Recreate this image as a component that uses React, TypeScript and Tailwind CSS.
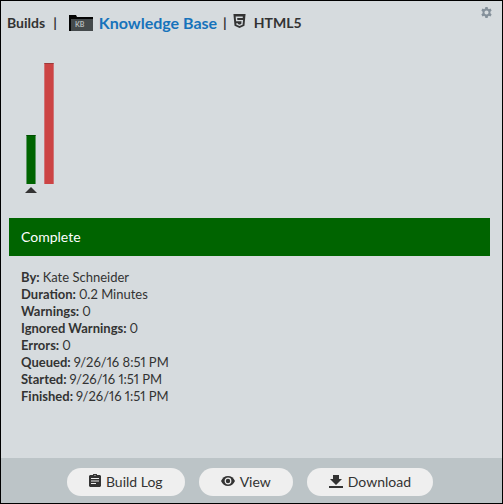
import type { ReactNode } from "react";

const details = [
  { label: "By", value: "Kate Schneider" },
  { label: "Duration", value: "0.2 Minutes" },
  { label: "Warnings", value: "0" },
  { label: "Ignored Warnings", value: "0" },
  { label: "Errors", value: "0" },
  { label: "Queued", value: "9/26/16 8:51 PM" },
  { label: "Started", value: "9/26/16 1:51 PM" },
  { label: "Finished", value: "9/26/16 1:51 PM" },
];

const builds = [
  { height: 49, style: "bg-[#006400] border-t-[#004d00] border-x-[#5f9a68]", selected: true },
  { height: 121, style: "bg-[#cc4444] border-t-[#9c3a3a] border-x-[#cf7376]", selected: false },
];

function FolderIcon() {
  return (
    <svg width="24" height="16" viewBox="0 0 24 16" role="img" aria-label="Knowledge Base project">
      <path d="M0 0h7l1 2h16v14H0z" fill="#050505" />
      <path d="M2 4h22v12H2z" fill="#454a4c" />
      <text x="6" y="12" fontSize="7" fontWeight="700" fill="#b5babc" fontFamily="Lato, sans-serif">
        KB
      </text>
    </svg>
  );
}

function Html5Icon() {
  return (
    <svg width="13" height="14" viewBox="0 0 13 15" aria-hidden="true">
      <path d="M0 0h13l-1.2 12.6L6.5 15l-5.3-2.4z" fill="#333" />
      <path d="M10 3.500H3.200l.3 3.600h6l-.4 4-2.600 1-2.600-1-.1-1.300" fill="none" stroke="#d6dbde" strokeWidth="1.500" />
    </svg>
  );
}

function GearIcon() {
  return (
    <svg width="11" height="11" viewBox="0 0 24 24" fill="#84909a" aria-hidden="true">
      <path
        fillRule="evenodd"
        d="M9.500 0h5l.6 3.500 2.200 1.200L20.700 3.500l2.500 4.300-2.700 2.400v3.600l2.700 2.400-2.500 4.300-3.400-1.200-2.200 1.200-.6 3.500h-5l-.6-3.500-2.200-1.200-3.400 1.200-2.500-4.300 2.700-2.400v-3.600L.8 7.800l2.500-4.300 3.400 1.200 2.200-1.200zM12 7.500a4.500 4.500 0 1 0 0 9 4.500 4.500 0 0 0 0-9z"
      />
    </svg>
  );
}

function ClipboardIcon() {
  return (
    <svg width="12" height="14" viewBox="0 0 12 14" aria-hidden="true">
      <path d="M1 1h3a2 2 0 0 1 4 0h3l1 1v10l-1 1H1l-1-1V2z" fill="#333" />
      <path d="M2 4.500h8M2 7h8M2 9.500h5" stroke="#efefef" strokeWidth="1" />
      <circle cx="6" cy="1.500" r=".6" fill="#efefef" />
    </svg>
  );
}

function EyeIcon() {
  return (
    <svg width="14" height="10" viewBox="0 0 14 10" aria-hidden="true">
      <path d="M0 5C1.300 1.900 3.900 0 7 0s5.700 1.900 7 5c-1.300 3.100-3.900 5-7 5S1.300 8.100 0 5z" fill="#333" />
      <circle cx="7" cy="5" r="2.800" fill="none" stroke="#efefef" strokeWidth="1.200" />
    </svg>
  );
}

function DownloadIcon() {
  return (
    <svg width="14" height="13" viewBox="0 0 14 13" aria-hidden="true">
      <path d="M4 0h6v4h3L7 10 1 4h3zM0 11h14v2H0z" fill="#333" />
    </svg>
  );
}

function PillButton({ icon, children }: { icon: ReactNode; children: ReactNode }) {
  return (
    <button
      type="button"
      className="flex h-7 items-center gap-[5px] rounded-full bg-[#efefef] px-[22px] text-sm whitespace-nowrap"
    >
      <span className="pb-0.5">{icon}</span>
      <span>{children}</span>
    </button>
  );
}

export default function App() {
  return (
    <main className="flex min-h-screen flex-col border border-black bg-[#d6dbde] font-['Lato',sans-serif] text-[#333]">
      <header className="flex items-start justify-between pt-1.5 pr-2.5 pl-1.5">
        <nav aria-label="Breadcrumb" className="flex items-center pt-1.5 text-sm leading-5 font-bold">
          <span>Builds</span>
          <span className="ml-2">|</span>
          <span className="mr-1.5 ml-3">
            <FolderIcon />
          </span>
          <a href="#knowledge-base" className="text-base leading-5 text-[#1673bb]">
            Knowledge Base
          </a>
          <span className="mx-1.5">|</span>
          <span className="pb-1">
            <Html5Icon />
          </span>
          <span className="ml-2">HTML5</span>
        </nav>
        <button type="button" aria-label="Settings">
          <GearIcon />
        </button>
      </header>

      <section aria-label="Recent builds" className="mt-[29px] flex h-[135px] items-start gap-2 pl-[25px]">
        {builds.map((build) => (
          <div key={build.height} className="flex w-2.5 flex-col items-center">
            <div className="flex h-[122px] w-full items-end">
              <div className={`w-full border-x border-t ${build.style}`} style={{ height: build.height }} />
            </div>
            {build.selected && (
              <svg width="12" height="6" viewBox="0 0 12 6" className="mt-[3px] shrink-0" aria-hidden="true">
                <path d="M0 6l6-6 6 6z" fill="#333" />
              </svg>
            )}
          </div>
        ))}
      </section>

      <h1 className="mt-[21px] mr-3 ml-2 bg-[#006400] px-3 py-2 text-sm leading-[22px] text-white">Complete</h1>

      <dl className="mt-[13px] mb-6 px-5 text-[13px] leading-[17px]">
        {details.map((item) => (
          <div key={item.label} className="flex gap-[3px]">
            <dt className="font-bold">{item.label}:</dt>
            <dd className="proportional-nums">{item.value}</dd>
          </div>
        ))}
      </dl>

      <footer className="mt-auto flex justify-center gap-3.5 bg-[#bcc4c7] pt-2.5 pr-[3px] pb-[7px]">
        <PillButton icon={<ClipboardIcon />}>Build Log</PillButton>
        <PillButton icon={<EyeIcon />}>View</PillButton>
        <PillButton icon={<DownloadIcon />}>Download</PillButton>
      </footer>
    </main>
  );
}
